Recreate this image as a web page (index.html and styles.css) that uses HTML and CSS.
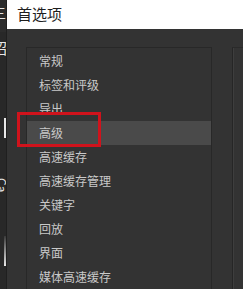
FILE: index.html
```html
<!DOCTYPE html>
<html lang="zh-CN">
<head>
  <meta charset="UTF-8">
  <title>首选项</title>
  <link rel="stylesheet" href="styles.css">
</head>
<body>
  <div class="app">
    <div class="side">
      <div class="side-top"><span class="clip-glyph">三</span></div>
      <span class="clip-glyph glyph-2">昭</span>
      <div class="side-bar"></div>
      <span class="clip-glyph glyph-3">Ca</span>
      <div class="side-bar bar-bottom"></div>
    </div>
    <div class="main">
      <div class="titlebar">首选项</div>
      <div class="content">
        <ul class="pref-list">
          <li>常规</li>
          <li>标签和评级</li>
          <li>导出</li>
          <li class="selected">高级</li>
          <li>高速缓存</li>
          <li>高速缓存管理</li>
          <li>关键字</li>
          <li>回放</li>
          <li>界面</li>
          <li>媒体高速缓存</li>
        </ul>
        <div class="pref-panel"></div>
      </div>
    </div>
  </div>
  <div class="highlight"></div>
</body>
</html>
```

FILE: styles.css
```css
body {
  margin: 0;
  background: #333333;
  font-family: "Noto Sans CJK SC", "Noto Sans", sans-serif;
  overflow: hidden;
}
.app {
  display: flex;
  height: 289px;
}
.side {
  width: 7px;
  flex-shrink: 0;
  background: #282828;
  overflow: hidden;
  display: flex;
  flex-direction: column;
  border-right: 1px solid #1f1f1f;
  box-sizing: border-box;
}
.side-top {
  height: 32px;
  background: #2c2c2c;
  overflow: hidden;
}
.clip-glyph {
  display: block;
  color: #e6e6e6;
  font-size: 14px;
  line-height: 16px;
  margin-left: -8px;
  margin-top: 4px;
  white-space: nowrap;
}
.glyph-2 {
  margin-top: 8px;
  font-size: 15px;
}
.side-bar {
  width: 2px;
  height: 20px;
  margin: 62px 0 0 4px;
  background: #e8e8e8;
}
.glyph-3 {
  margin-top: 36px;
  font-size: 12px;
  transform: rotate(90deg);
  margin-left: -2px;
}
.bar-bottom {
  height: 30px;
  margin-top: 46px;
  background: linear-gradient(#3a3a3a, #e8e8e8);
}
.main {
  flex: 1;
  display: flex;
  flex-direction: column;
}
.titlebar {
  height: 32px;
  background: #ffffff;
  color: #1e1e1e;
  font-size: 15px;
  line-height: 28px;
  padding-left: 10px;
}
.content {
  flex: 1;
  display: flex;
  padding: 18px 0 0 19px;
}
.pref-list {
  list-style: none;
  margin: 0;
  padding: 1px 0 0;
  width: 186px;
  border: 1px solid #282828;
  border-bottom: none;
  box-sizing: border-box;
}
.pref-list li {
  height: 24px;
  line-height: 24px;
  padding-left: 12px;
  font-size: 12px;
  color: #c9c9c9;
}
.pref-list li.selected {
  background: #4a4a4a;
}
.pref-panel {
  margin-left: 20px;
  flex: 1;
  border-left: 1px solid #262626;
  border-top: 1px solid #2a2a2a;
  box-shadow: inset 1px 0 0 #3e3e3e;
}
.highlight {
  position: absolute;
  left: 17px;
  top: 112px;
  width: 84px;
  height: 35px;
  border: 3px solid #d0131c;
  box-sizing: border-box;
}
```
